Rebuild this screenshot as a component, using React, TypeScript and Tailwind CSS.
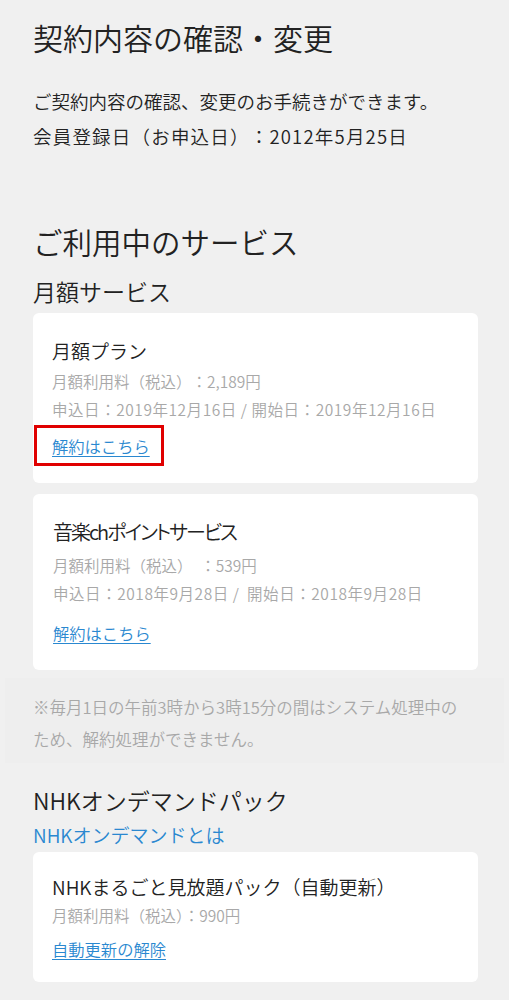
import React from "react";

const font = { fontFamily: '"Noto Sans CJK JP", "Noto Sans", sans-serif' };

export default function App() {
  return (
    <div
      className="min-h-[1000px] w-[509px] bg-[#f0f0f0] pl-[33px] pr-[31px] pt-[17px] pb-[20px] font-[350] text-[#222222] [text-spacing-trim:space-all]"
      style={font}
    >
      <h1 className="text-[30px] leading-[40px] font-[350]">契約内容の確認・変更</h1>
      <div className="mt-[27px] text-[18.5px] leading-[35px]">
        <p>ご契約内容の確認、変更のお手続きができます。</p>
        <p className="tracking-[1.2px]">会員登録日（お申込日）：2012年5月25日</p>
      </div>

      <h2 className="mt-[67px] text-[29.5px] leading-[40px] font-[350]">ご利用中のサービス</h2>
      <h3 className="mt-[13px] text-[23px] leading-[34px] font-[350]">月額サービス</h3>

      <div className="mt-[5px] h-[170px] rounded-[6px] bg-white pl-[19px] pr-[16px] pt-[24px]">
        <p className="text-[19px] leading-[28px]">月額プラン</p>
        <p className="mt-[2px] text-[15.5px] leading-[28px] text-[#a8a8a8]">月額利用料（税込）：2,189円</p>
        <p className="text-[15.5px] leading-[28px] tracking-[0.55px] text-[#a8a8a8]">
          申込日：2019年12月16日 / 開始日：2019年12月16日
        </p>
        <div className="-ml-[18px] mt-[2px] flex h-[41px] w-[130px] items-center border-[3px] border-[#e00000] pl-[15px]">
          <a className="text-[16.3px] leading-[24px] text-[#2a88d0] underline underline-offset-[3px]" href="#">
            解約はこちら
          </a>
        </div>
      </div>

      <div className="mt-[11px] h-[176px] rounded-[6px] bg-white pl-[20px] pr-[16px] pt-[24px]">
        <p className="text-[20px] leading-[28px] tracking-[-2px] [font-feature-settings:'palt']">音楽chポイントサービス</p>
        <p className="mt-[5px] text-[15.5px] leading-[28px] text-[#a8a8a8]">月額利用料（税込）{"\u2002"}：539円</p>
        <p className="text-[15.5px] leading-[28px] tracking-[0.55px] text-[#a8a8a8]">申込日：2018年9月28日 / {"\u2009"}開始日：2018年9月28日</p>
        <p className="mt-[12px] text-[16.3px] leading-[28px]">
          <a className="text-[#2a88d0] underline underline-offset-[3px]" href="#">
            解約はこちら
          </a>
        </p>
      </div>

      <div className="-ml-[28px] -mr-[26px] mt-[8px] bg-[#eeeeee] pl-[28px] pr-[26px] pt-[13px] pb-[8px]">
        <p className="text-[16.5px] leading-[32px] text-[#a8a8a8]">
          ※毎月1日の午前3時から3時15分の間はシステム処理中の
          <br />
          ため、解約処理ができません。
        </p>
      </div>

      <h3 className="mt-[20px] text-[23px] leading-[34px] font-[350]">NHKオンデマンドパック</h3>
      <a className="mt-[4px] block text-[19px] leading-[28px] text-[#2a88d0]" href="#">
        NHKオンデマンドとは
      </a>

      <div className="mt-[3px] h-[130px] rounded-[6px] bg-white pl-[19px] pr-[16px] pt-[21px]">
        <p className="text-[19px] leading-[28px]">NHKまるごと見放題パック（自動更新）</p>
        <p className="text-[15.5px] leading-[28px] text-[#a8a8a8] [text-spacing-trim:normal]">月額利用料（税込）：990円</p>
        <p className="mt-[6px] text-[16.3px] leading-[28px]">
          <a className="text-[#2a88d0] underline underline-offset-[3px]" href="#">
            自動更新の解除
          </a>
        </p>
      </div>
    </div>
  );
}
